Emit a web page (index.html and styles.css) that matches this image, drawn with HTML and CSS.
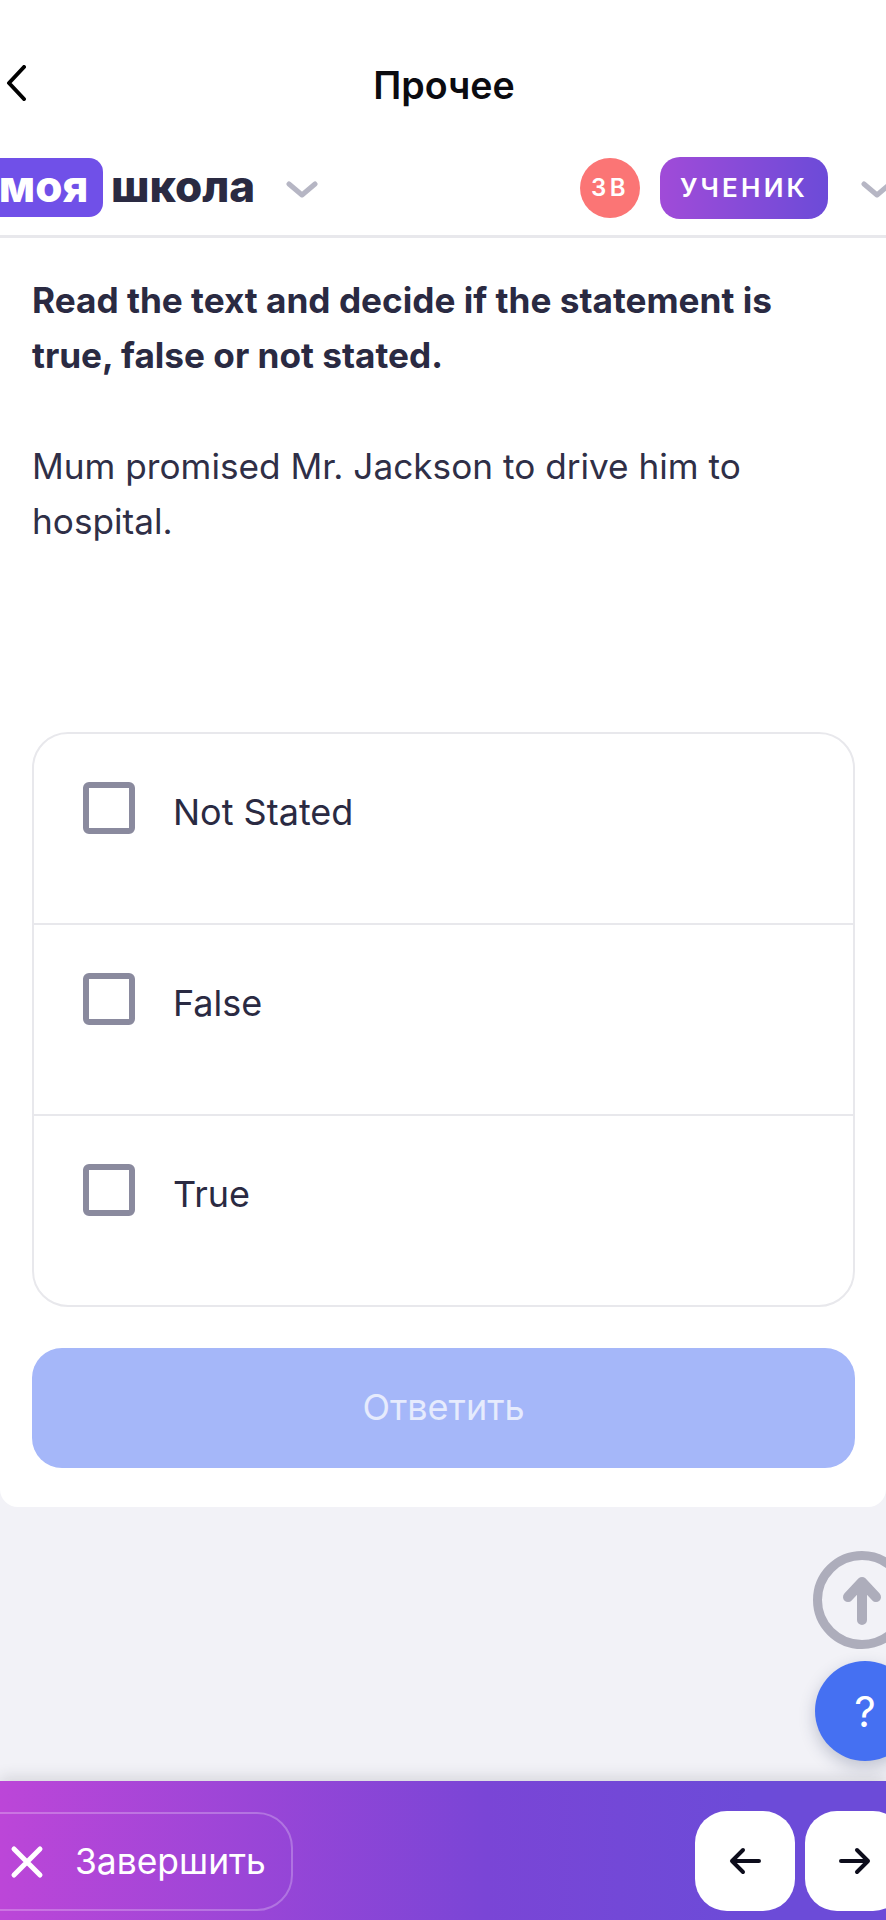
FILE: index.html

```html
<!DOCTYPE html>
<html lang="ru">
<head>
  <meta charset="UTF-8" />
  <meta name="viewport" content="width=device-width, initial-scale=1.0" />
  <title>Прочее</title>
  <link rel="stylesheet" href="styles.css">
</head>
<body>
  <div class="page">
    <div class="panel">
      <header class="title-bar">
        <svg class="back-icon" viewBox="0 0 20 36" aria-hidden="true"><path d="M18 2 3 18l15 16" /></svg>
        <h1 class="title">Прочее</h1>
      </header>

      <div class="school-bar">
        <div class="logo">
          <span class="logo-badge">моя</span>
          <span class="logo-word">школа</span>
          <svg class="chevron logo-chevron" viewBox="0 0 32 18" aria-hidden="true"><path d="M3 3l13 11L29 3" /></svg>
        </div>
        <div class="user">
          <span class="avatar">ЗВ</span>
          <span class="role">УЧЕНИК</span>
          <svg class="chevron" viewBox="0 0 32 18" aria-hidden="true"><path d="M3 3l13 11L29 3" /></svg>
        </div>
      </div>

      <main class="task">
        <p class="task-lead">Read the text and decide if the statement is true, false or not stated.</p>
        <p class="task-text">Mum promised Mr. Jackson to drive him to hospital.</p>

        <ul class="options">
          <li class="option"><span class="checkbox"></span>Not Stated</li>
          <li class="option"><span class="checkbox"></span>False</li>
          <li class="option"><span class="checkbox"></span>True</li>
        </ul>

        <button class="submit">Ответить</button>
      </main>
    </div>

    <div class="spacer"></div>

    <footer class="bottom-bar">
      <button class="finish">
        <svg class="finish-icon" viewBox="0 0 34 34" aria-hidden="true"><path d="M4 4l26 26M30 4 4 30" /></svg>
        Завершить
      </button>
      <div class="nav">
        <button class="nav-btn">
          <svg viewBox="0 0 32 28" aria-hidden="true"><path d="M30 14H3M14 3 3 14l11 11" /></svg>
        </button>
        <button class="nav-btn">
          <svg viewBox="0 0 32 28" aria-hidden="true"><path d="M2 14h27M18 3l11 11-11 11" /></svg>
        </button>
      </div>
    </footer>

    <!-- floating buttons, half off the right edge -->
    <div class="scroll-up">
      <svg viewBox="0 0 98 98" aria-hidden="true">
        <circle cx="49" cy="49" r="44.5" />
        <path d="M49 69V31M35 46l14-15 14 15" />
      </svg>
    </div>
    <div class="help">?</div>
  </div>
</body>
</html>
```

FILE: styles.css

```css
* {
  box-sizing: border-box;
}

html, body {
  margin: 0;
  padding: 0;
}

body {
  font-family: 'Inter', 'Noto Sans', sans-serif;
  color: #2a2a42;
}

.page {
  position: relative;
  width: 886px;
  height: 1920px;
  overflow: hidden;
  display: flex;
  flex-direction: column;
  background: #f2f2f7;
}

.panel {
  background: #fff;
  height: 1507px;
  border-radius: 0 0 18px 18px;
}

/* title */
.title-bar {
  display: flex;
  align-items: center;
  justify-content: center;
  position: relative;
  padding-top: 62px;
  padding-left: 2px;
  height: 108px;
}

.back-icon {
  position: absolute;
  left: 6px;
  top: 65px;
  width: 20px;
  height: 36px;
  fill: none;
  stroke: #000;
  stroke-width: 4;
  stroke-linecap: round;
  stroke-linejoin: round;
}

.title {
  margin: 0;
  font-size: 37.6px;
  font-weight: 600;
  color: #0b0b10;
}

/* logo row */
.school-bar {
  display: flex;
  justify-content: space-between;
  align-items: center;
  height: 130px;
  padding-top: 50px;
  padding-bottom: 18px;
  border-bottom: 3px solid #e8e8ec;
}

.logo {
  display: flex;
  align-items: center;
  margin-left: -12px;
}

.logo-badge {
  display: flex;
  align-items: center;
  justify-content: center;
  width: 115px;
  height: 59px;
  border-radius: 0 14px 14px 0;
  background: #7050e8;
  color: #fff;
  font-size: 44px;
  font-weight: 800;
  line-height: 1;
  padding-bottom: 4px;
  padding-right: 4px;
}

.logo-word {
  margin-left: 8px;
  font-size: 44px;
  font-weight: 800;
  line-height: 1;
  padding-bottom: 4px;
}

.chevron {
  width: 32px;
  height: 18px;
  fill: none;
  stroke: #b6b6c4;
  stroke-width: 5;
  stroke-linecap: round;
  stroke-linejoin: round;
}

.logo-chevron {
  margin-left: 31px;
  margin-top: 5px;
}

.user {
  display: flex;
  align-items: center;
  margin-right: -7px;
}

.user .chevron {
  margin-left: 33px;
  margin-top: 5px;
}

.avatar {
  display: flex;
  align-items: center;
  justify-content: center;
  width: 60px;
  height: 60px;
  border-radius: 50%;
  background: #fb7575;
  color: #fff;
  font-size: 24px;
  font-weight: 600;
  letter-spacing: 3.5px;
}

.role {
  display: flex;
  align-items: center;
  justify-content: center;
  margin-left: 20px;
  width: 168px;
  height: 62px;
  border-radius: 20px;
  background: linear-gradient(90deg, #a04bd8, #6c4bd8);
  color: #fff;
  font-size: 26px;
  font-weight: 600;
  letter-spacing: 3.2px;
}

/* question */
.task {
  padding: 0 31px 0 32px;
}

.task-lead,
.task-text {
  margin: 0;
  font-size: 35.2px;
  line-height: 55px;
}

.task-lead {
  padding-top: 35px;
  padding-right: 30px;
  font-weight: 700;
}

.task-text {
  margin-top: 56px;
  color: #2f2f47;
}

.options {
  list-style: none;
  margin: 183px 0 0;
  padding: 0;
  height: 575px;
  border: 2px solid #e8e8ec;
  border-radius: 36px;
}

.option {
  display: flex;
  align-items: flex-start;
  gap: 38px;
  height: 191px;
  padding: 48px 0 0 49px;
  font-size: 36px;
  line-height: 60px;
  border-bottom: 2px solid #e8e8ec;
}

.option:last-child {
  border-bottom: none;
}

.checkbox {
  width: 52px;
  height: 52px;
  border: 6px solid #8a8a9e;
  border-radius: 6px;
  flex: none;
}

.submit {
  display: block;
  width: 100%;
  height: 120px;
  margin-top: 41px;
  padding-bottom: 4px;
  border: none;
  border-radius: 30px;
  background: #a5b7f9;
  color: #e6ebfd;
  font-family: inherit;
  font-size: 36px;
}

.spacer {
  flex: 1;
}

/* bottom bar */
.bottom-bar {
  display: flex;
  justify-content: space-between;
  height: 139px;
  padding-top: 30px;
  background: linear-gradient(90deg, #bc46d8 0%, #7a45d6 55%, #6c4bd8 85%);
  box-shadow: 0 -4px 14px rgba(40, 40, 60, 0.14);
}

.finish {
  display: flex;
  align-items: center;
  width: 333px;
  height: 99px;
  margin-top: 1px;
  margin-left: -40px;
  padding: 0 0 0 48px;
  border: 2px solid rgba(255, 255, 255, 0.25);
  border-radius: 36px;
  background: transparent;
  color: #fff;
  font-family: inherit;
  font-size: 35.4px;
}

.finish-icon {
  width: 34px;
  height: 34px;
  margin-right: 31px;
  fill: none;
  stroke: #fff;
  stroke-width: 5;
  stroke-linecap: round;
}

.nav {
  display: flex;
  gap: 10px;
  margin-right: -19px;
}

.nav-btn {
  display: flex;
  align-items: center;
  justify-content: center;
  width: 100px;
  height: 100px;
  padding: 0;
  border: none;
  border-radius: 32px;
  background: #fff;
}

.nav-btn svg {
  width: 32px;
  height: 28px;
  fill: none;
  stroke: #0d0d1c;
  stroke-width: 4;
  stroke-linecap: round;
  stroke-linejoin: round;
}

/* floating */
.scroll-up {
  position: absolute;
  left: 813px;
  top: 1551px;
  width: 98px;
  height: 98px;
}

.scroll-up svg {
  display: block;
  width: 100%;
  height: 100%;
  fill: none;
  stroke: #adadbb;
  stroke-width: 9;
  stroke-linecap: round;
  stroke-linejoin: round;
}

.scroll-up path {
  stroke-width: 10;
}

.help {
  position: absolute;
  left: 815px;
  top: 1661px;
  width: 100px;
  height: 100px;
  display: flex;
  align-items: center;
  justify-content: center;
  border-radius: 50%;
  background: #4570f2;
  box-shadow: 0 6px 16px rgba(40, 50, 90, 0.25);
  color: #fff;
  font-size: 42px;
}
```
